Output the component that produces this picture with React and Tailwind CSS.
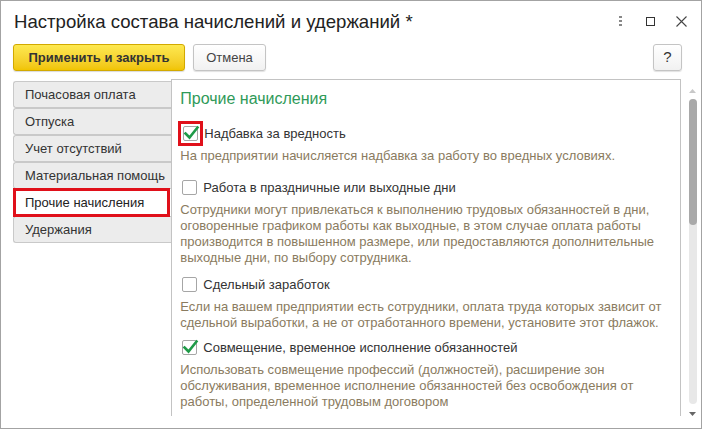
import React from 'react';

const font = { fontFamily: '"Liberation Sans", Arial, sans-serif' };

const Check = ({ checked, highlight }) => (
    <div className={`flex items-center justify-center ${highlight ? 'w-[25px] h-[25px] border-[3px] border-[#e0101a] -ml-[2px] mr-[1px]' : 'w-[19px] h-[19px] mr-[4px]'}`}>
        <div className="relative w-[15px] h-[15px] border border-[#a6a6a6] rounded-[2px] bg-white">
            {checked && (
                <svg className="absolute -top-[2px] -left-[1px]" width="17" height="16" viewBox="0 0 17 16">
                    <path d="M2.5 8.5 L6.5 12.5 L14.5 2.5" fill="none" stroke="#1f9a48" strokeWidth="2.6" strokeLinecap="square" />
                </svg>
            )}
        </div>
    </div>
);

const Option = ({ label, checked, highlight, lines, className = '' }) => (
    <div className={className}>
        <div className="flex items-center h-[25px]">
            <Check checked={checked} highlight={highlight} />
            <span className="text-[13px] text-[#333]">{label}</span>
        </div>
        <div className="mt-[2px] text-[13px] leading-[16px] text-[#8a7b60]">
            {lines.map((l, i) => <div key={i}>{l}</div>)}
        </div>
    </div>
);

const tabs = ['Почасовая оплата', 'Отпуска', 'Учет отсутствий', 'Материальная помощь', 'Прочие начисления', 'Удержания'];

export default function App() {
    return (
        <div style={font} className="w-[702px] h-[429px] bg-white border border-[#a3a3a3] flex flex-col overflow-hidden">
            {/* заголовок */}
            <div className="flex items-center justify-between h-[40px] pl-[13px] pr-[14px]">
                <div className="text-[18.6px] text-[#222] pt-[1px]">Настройка состава начислений и удержаний *</div>
                <div className="flex items-center">
                    <div className="flex flex-col gap-[2px] mr-[24px]">
                        <div className="w-[3px] h-[2px] bg-[#888]" />
                        <div className="w-[3px] h-[2px] bg-[#888]" />
                        <div className="w-[3px] h-[2px] bg-[#888]" />
                    </div>
                    <div className="w-[9px] h-[9px] border border-[#333] mr-[21px]" />
                    <svg width="11" height="11" viewBox="0 0 11 11">
                        <path d="M0.5 0.5 L10.5 10.5 M10.5 0.5 L0.5 10.5" stroke="#444" strokeWidth="1.1" />
                    </svg>
                </div>
            </div>

            {/* кнопки */}
            <div className="flex items-center h-[27px] mt-[3px] pl-[12px] pr-[19px]">
                <button className="h-[27px] w-[172px] rounded-[3px] border border-[#d2a900] bg-gradient-to-b from-[#fde94f] to-[#f1c400] text-[13px] text-[#333] font-semibold shadow-[0_1px_1px_rgba(0,0,0,0.15)]">
                    Применить и закрыть
                </button>
                <button className="ml-[8px] h-[27px] w-[73px] rounded-[3px] border border-[#c4c4c4] bg-gradient-to-b from-white to-[#f1f1f1] text-[13px] text-[#444] shadow-[0_1px_1px_rgba(0,0,0,0.12)]">
                    Отмена
                </button>
                <div className="flex-1" />
                <button className="h-[27px] w-[29px] rounded-[3px] border border-[#c4c4c4] bg-gradient-to-b from-white to-[#f1f1f1] text-[15px] text-[#333] shadow-[0_1px_1px_rgba(0,0,0,0.12)]">
                    ?
                </button>
            </div>

            {/* тело */}
            <div className="flex mt-[8px] pl-[12px] pr-[4px]">
                <div className="w-[159px] pt-[2px] flex flex-col">
                    {tabs.map((t) =>
                        t === 'Прочие начисления' ? (
                            <div key={t} className="h-[29px] -mt-[1px] -mb-[1px] flex items-center pl-[9px] bg-white border-[3px] border-[#e0101a] text-[13px] text-[#222] mr-[1px] relative z-10">
                                {t}
                            </div>
                        ) : (
                            <div key={t} className="h-[27px] flex items-center pl-[11px] bg-[#ececec] border border-[#c9c9c9] border-r-0 rounded-l-[3px] text-[13px] text-[#333]">
                                {t}
                            </div>
                        )
                    )}
                </div>

                <div className="w-[512px] h-[337px] border-l border-t border-r border-[#c3c3c3] overflow-hidden pl-[8px] pt-[9px]">
                    <div className="text-[16px] leading-[20px] text-[#2f9a59]">Прочие начисления</div>
                    <Option
                        className="mt-[12px]"
                        label="Надбавка за вредность"
                        checked
                        highlight
                        lines={['На предприятии начисляется надбавка за работу во вредных условиях.']}
                    />
                    <Option
                        className="mt-[11px]"
                        label="Работа в праздничные или выходные дни"
                        lines={[
                            'Сотрудники могут привлекаться к выполнению трудовых обязанностей в дни,',
                            'оговоренные графиком работы как выходные, в этом случае оплата работы',
                            'производится в повышенном размере, или предоставляются дополнительные',
                            'выходные дни, по выбору сотрудника.',
                        ]}
                    />
                    <Option
                        className="mt-[6px]"
                        label="Сдельный заработок"
                        lines={[
                            'Если на вашем предприятии есть сотрудники, оплата труда которых зависит от',
                            'сдельной выработки, а не от отработанного времени, установите этот флажок.',
                        ]}
                    />
                    <Option
                        className="mt-[4px]"
                        label="Совмещение, временное исполнение обязанностей"
                        checked
                        lines={[
                            'Использовать совмещение профессий (должностей), расширение зон',
                            'обслуживания, временное исполнение обязанностей без освобождения от',
                            'работы, определенной трудовым договором',
                        ]}
                    />
                </div>

                {/* полоса прокрутки */}
                <div className="w-[9px] ml-[7px] flex flex-col items-center pt-[10px]">
                    <svg width="7" height="4" viewBox="0 0 7 4"><path d="M0 4 L3.5 0 L7 4 Z" fill="#c8c8c8" /></svg>
                    <div className="mt-[6px] w-[8px] h-[305px] rounded-[4px] bg-[#e8e8e8] flex flex-col">
                        <div className="h-[126px] rounded-[4px] bg-[#a9a9a9]" />
                    </div>
                    <svg className="mt-[8px]" width="7" height="4" viewBox="0 0 7 4"><path d="M0 0 L7 0 L3.5 4 Z" fill="#666" /></svg>
                </div>
            </div>
        </div>
    );
}
